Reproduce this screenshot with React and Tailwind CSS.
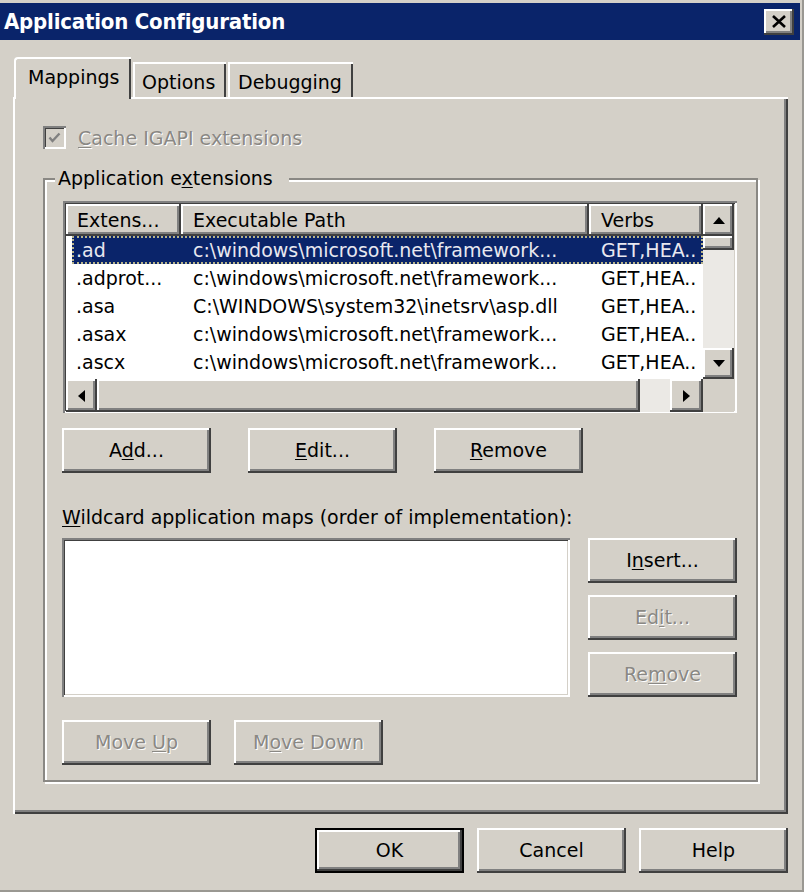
import React from "react";

const raised =
  "bg-[#d4d0c8] shadow-[inset_-2px_-2px_0_#404040,inset_2px_2px_0_#ffffff,inset_-4px_-4px_0_#808080]";
const sunken =
  "shadow-[inset_2px_2px_0_#808080,inset_-2px_-2px_0_#ffffff,inset_3px_3px_0_#404040,inset_-3px_-3px_0_#d4d0c8]";
const disabledText = "text-[#8a8884] [text-shadow:1px_1px_0_#ffffff]";

const Btn = ({ children, disabled, isDefault, className = "" }) => (
  <div
    className={`flex items-center justify-center w-[149px] h-[45px] ${
      isDefault ? "border-2 border-black" : ""
    } ${raised} ${disabled ? disabledText : "text-black"} ${className}`}
  >
    <span className="pb-[2px]">{children}</span>
  </div>
);

const Arrow = ({ dir }) => {
  const pts = {
    up: "0,7 6,0 12,7",
    down: "0,0 6,7 12,0",
    left: "7,0 0,6 7,12",
    right: "0,0 7,6 0,12",
  }[dir];
  const vertical = dir === "up" || dir === "down";
  return (
    <svg
      width={vertical ? 12 : 7}
      height={vertical ? 7 : 12}
      viewBox={vertical ? "0 0 12 7" : "0 0 7 12"}
    >
      <polygon points={pts} fill="#000" />
    </svg>
  );
};

const rows = [
  { ext: ".ad", path: "c:\\windows\\microsoft.net\\framework...", verbs: "GET,HEA..", selected: true },
  { ext: ".adprot...", path: "c:\\windows\\microsoft.net\\framework...", verbs: "GET,HEA.." },
  { ext: ".asa", path: "C:\\WINDOWS\\system32\\inetsrv\\asp.dll", verbs: "GET,HEA.." },
  { ext: ".asax", path: "c:\\windows\\microsoft.net\\framework...", verbs: "GET,HEA.." },
  { ext: ".ascx", path: "c:\\windows\\microsoft.net\\framework...", verbs: "GET,HEA.." },
];

export default function App() {
  return (
    <div
      className="w-[804px] h-[892px] bg-[#d4d0c8] flex flex-col text-[19px] leading-[24px] text-black overflow-hidden shadow-[inset_-2px_-2px_0_#9a9892]"
      style={{ fontFamily: '"DejaVu Sans", Verdana, sans-serif' }}
    >
      {/* title bar */}
      <div className="pt-[3px] pr-[4px]">
        <div className="h-[37px] bg-[#0a246a] flex items-center justify-between pl-[4px] pr-[6px]">
          <span
            className="text-white font-bold text-[22px] tracking-[-0.2px]"
            style={{ fontFamily: '"DejaVu Sans Condensed", "DejaVu Sans", sans-serif' }}
          >
            Application Configuration
          </span>
          <div className={`w-[30px] h-[26px] flex items-center justify-center ${raised}`}>
            <svg width="14" height="13" viewBox="0 0 14 13">
              <path d="M1 1 L13 12 M13 1 L1 12" stroke="#000" strokeWidth="2.6" />
            </svg>
          </div>
        </div>
      </div>

      <div className="flex flex-col pl-[13px] pr-[16px] pt-[17px]">
        {/* tabs */}
        <div className="flex items-end h-[40px] pl-[1px]">
          <div className="relative z-10 -mb-[2px] w-[117px] h-[42px] bg-[#d4d0c8] rounded-tl-[4px] border-l-2 border-t-2 border-white shadow-[inset_-2px_0_0_#404040] flex items-center pl-[12px] pb-[4px]">
            Mappings
          </div>
          <div className="ml-[2px] w-[93px] h-[35px] border-l-2 border-t-2 border-white shadow-[inset_-2px_0_0_#404040] flex items-center pl-[7px] pt-[2px]">
            Options
          </div>
          <div className="ml-[2px] w-[125px] h-[35px] border-l-2 border-t-2 border-white shadow-[inset_-2px_0_0_#404040] flex items-center pl-[8px] pt-[2px]">
            Debugging
          </div>
        </div>

        {/* tab panel */}
        <div className="h-[717px] border-l-2 border-t-2 border-white shadow-[inset_-2px_-2px_0_#404040,inset_-4px_-4px_0_#808080] pl-[28px] pt-[27px] pr-[30px]">
          {/* checkbox */}
          <div className="flex items-center h-[23px]">
            <div className={`w-[23px] h-[23px] bg-[#d4d0c8] flex items-center justify-center ${sunken}`}>
              <svg width="13" height="12" viewBox="0 0 13 12">
                <path d="M1.5 5.5 L4.5 9 L11.5 1.5" stroke="#808080" strokeWidth="2.4" fill="none" />
              </svg>
            </div>
            <span className={`ml-[12px] ${disabledText}`}>
              <span className="underline underline-offset-2">C</span>ache IGAPI extensions
            </span>
          </div>

          {/* group box */}
          <div className="mt-[29px] w-[715px] border-2 border-[#8a8884] shadow-[inset_2px_2px_0_#ffffff,2px_2px_0_#ffffff] px-[18px] pb-[15px]">
            <div className="-mt-[14px] -ml-[8px] w-fit bg-[#d4d0c8] pl-[3px] pr-[16px] h-[24px]">
              Application e<span className="underline underline-offset-2">x</span>tensions
            </div>

            {/* list view */}
            <div className={`mt-[11px] w-[674px] h-[212px] bg-white p-[3px] ${sunken}`}>
              <div className="flex h-[175px]">
                <div className="w-[637px] flex flex-col bg-white">
                  <div className="flex h-[32px]">
                    <div className={`w-[115px] flex items-center pl-[11px] ${raised}`}>Extens...</div>
                    <div className={`w-[408px] flex items-center pl-[12px] ${raised}`}>Executable Path</div>
                    <div className={`w-[114px] flex items-center pl-[12px] ${raised}`}>Verbs</div>
                  </div>
                  {rows.map((r) => (
                    <div key={r.ext} className="h-[28px] flex pl-[6px]">
                      <div
                        className={`flex w-[631px] h-[28px] items-center ${
                          r.selected
                            ? "bg-[#0a246a] text-[#e8e8f0] outline-2 outline-dotted outline-[#b8b48a] -outline-offset-2"
                            : ""
                        }`}
                      >
                        <div className="w-[109px] pl-[4px] whitespace-nowrap overflow-hidden">{r.ext}</div>
                        <div className="w-[408px] pl-[12px] whitespace-nowrap overflow-hidden">{r.path}</div>
                        <div className="w-[114px] pl-[12px] whitespace-nowrap overflow-hidden">{r.verbs}</div>
                      </div>
                    </div>
                  ))}
                </div>
                {/* vertical scrollbar */}
                <div className="w-[31px] flex flex-col bg-[#ebe9e5]">
                  <div className={`h-[32px] flex items-center justify-center ${raised}`}>
                    <Arrow dir="up" />
                  </div>
                  <div className={`h-[14px] ${raised}`} />
                  <div className="flex-1" />
                  <div className={`h-[31px] flex items-center justify-center ${raised}`}>
                    <Arrow dir="down" />
                  </div>
                </div>
              </div>
              {/* horizontal scrollbar */}
              <div className="flex h-[33px]">
                <div className="w-[637px] flex bg-[#ebe9e5]">
                  <div className={`w-[31px] flex items-center justify-center ${raised}`}>
                    <Arrow dir="left" />
                  </div>
                  <div className={`w-[543px] ${raised}`} />
                  <div className="w-[30px]" />
                  <div className={`w-[33px] flex items-center justify-center ${raised}`}>
                    <Arrow dir="right" />
                  </div>
                </div>
                <div className="w-[31px] bg-[#d4d0c8]" />
              </div>
            </div>

            {/* add / edit / remove */}
            <div className="mt-[15px] -ml-[1px] flex gap-[37px]">
              <Btn>
                A<span className="underline underline-offset-2">d</span>d...
              </Btn>
              <Btn>
                <span className="underline underline-offset-2">E</span>dit...
              </Btn>
              <Btn>
                <span className="underline underline-offset-2">R</span>emove
              </Btn>
            </div>

            <div className="mt-[32px] -ml-[1px] h-[24px]">
              <span className="underline underline-offset-2">W</span>ildcard application maps (order of implementation):
            </div>

            <div className="mt-[9px] -ml-[1px] flex gap-[18px]">
              <div className={`w-[508px] h-[159px] bg-white ${sunken}`} />
              <div className="flex flex-col gap-[12px]">
                <Btn>
                  I<span className="underline underline-offset-2">n</span>sert...
                </Btn>
                <Btn disabled>
                  Ed<span className="underline underline-offset-2">i</span>t...
                </Btn>
                <Btn disabled>
                  Re<span className="underline underline-offset-2">m</span>ove
                </Btn>
              </div>
            </div>

            <div className="mt-[23px] -ml-[1px] flex gap-[23px]">
              <Btn disabled>
                Move <span className="underline underline-offset-2">U</span>p
              </Btn>
              <Btn disabled>
                M<span className="underline underline-offset-2">o</span>ve Down
              </Btn>
            </div>
          </div>
        </div>

        {/* dialog buttons */}
        <div className="mt-[14px] flex justify-end gap-[13px]">
          <Btn isDefault>OK</Btn>
          <Btn>Cancel</Btn>
          <Btn>Help</Btn>
        </div>
      </div>
    </div>
  );
}
